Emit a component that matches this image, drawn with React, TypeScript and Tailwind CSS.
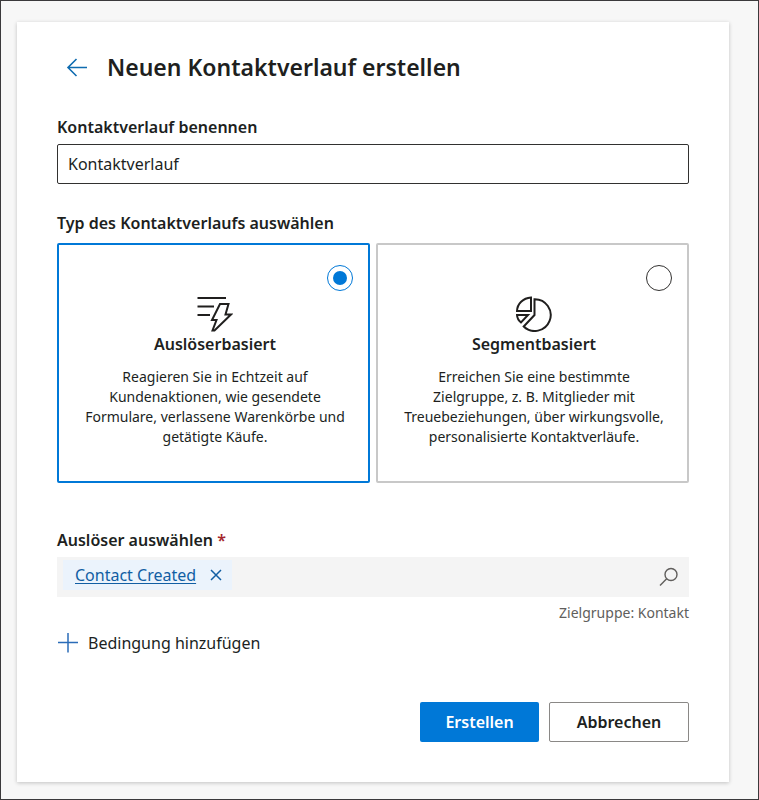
import { useState } from "react";
import type { ReactNode } from "react";

function TriggerIcon() {
  return (
    <svg width="36" height="36" viewBox="0 0 36 36" fill="none" stroke="#201f1e" strokeWidth="2" aria-hidden="true">
      <path d="M0.500 2H29M0.500 10.500H17M0.500 19H13" />
      <path d="M23 8H31.500L28.500 18.500H34L17.500 34.500H15.500L19.500 24H15Z" />
    </svg>
  );
}

function SegmentIcon() {
  return (
    <svg width="36" height="36" viewBox="0 0 36 36" fill="none" stroke="#201f1e" strokeWidth="2" aria-hidden="true">
      <path d="M18.500 3.200A15.900 15.900 0 1 1 7.700 30.500L18.500 19Z" />
      <path d="M15 1.500V15H1C1.300 8 7 2 15 1.500Z" />
      <path d="M1 19H12L5 26.500C2.500 24.500 1.200 22 1 19Z" />
    </svg>
  );
}

type OptionProps = {
  value: string;
  title: string;
  text: string;
  icon: ReactNode;
  checked: boolean;
  onSelect: (value: string) => void;
};

function TypeOption({ value, title, text, icon, checked, onSelect }: OptionProps) {
  return (
    <label
      className={`flex min-h-60 flex-1 flex-col items-center rounded-xs border-2 pt-5 pr-[15px] pl-[18px] text-center ${
        checked ? "border-[#0078d7]" : "border-[#c8c8c8]"
      }`}
    >
      <input
        type="radio"
        name="journey-type"
        value={value}
        checked={checked}
        onChange={() => onSelect(value)}
        className="grid size-[26px] appearance-none place-content-center self-end rounded-full border border-[#323130] before:size-3.5 before:rounded-full checked:border-[#0078d7] checked:before:bg-[#0078d7]"
      />
      <span className="mt-[5px]">{icon}</span>
      <span className="text-base leading-6 font-semibold">{title}</span>
      <span className="mt-[11px] px-1 text-sm leading-5">{text}</span>
    </label>
  );
}

export default function App() {
  const [name, setName] = useState("Kontaktverlauf");
  const [type, setType] = useState("trigger");

  return (
    <div className="min-h-screen border border-[#3b3a3c] bg-[#f7f7f7] pt-[21px] pr-[29px] pb-4 pl-4 font-['Noto_Sans','Segoe_UI',sans-serif] text-[#201f1e]">
      <main className="bg-white px-10 pt-[25px] pb-10 shadow-[0_1px_4px_rgba(0,0,0,0.22)]">
        <header className="flex h-10 items-center gap-5 pl-2">
          <button type="button" aria-label="Zurück" className="text-[#0f6cb0]">
            <svg width="22" height="20" viewBox="0 0 22 20" fill="none" stroke="currentColor" strokeWidth="1.600" aria-hidden="true">
              <path d="M22 10.500H3M11.500 2L3 10.500L11.500 19" />
            </svg>
          </button>
          <h1 className="text-[23px] font-semibold">Neuen Kontaktverlauf erstellen</h1>
        </header>

        <form onSubmit={(e) => e.preventDefault()}>
          <label htmlFor="journey-name" className="mt-7 block text-base leading-6 font-semibold">
            Kontaktverlauf benennen
          </label>
          <input
            id="journey-name"
            type="text"
            value={name}
            onChange={(e) => setName(e.target.value)}
            className="mt-[5px] h-10 w-full rounded-xs border border-[#323130] px-2.5 text-base"
          />

          <fieldset className="mt-[27px]">
            <legend className="text-base leading-6 font-semibold">Typ des Kontaktverlaufs auswählen</legend>
            <div className="mt-2 flex gap-1.5">
              <TypeOption
                value="trigger"
                title="Auslöserbasiert"
                text="Reagieren Sie in Echtzeit auf Kundenaktionen, wie gesendete Formulare, verlassene Warenkörbe und getätigte Käufe."
                icon={<TriggerIcon />}
                checked={type === "trigger"}
                onSelect={setType}
              />
              <TypeOption
                value="segment"
                title="Segmentbasiert"
                text="Erreichen Sie eine bestimmte Zielgruppe, z. B. Mitglieder mit Treuebeziehungen, über wirkungsvolle, personalisierte Kontaktverläufe."
                icon={<SegmentIcon />}
                checked={type === "segment"}
                onSelect={setType}
              />
            </div>
          </fieldset>

          <label htmlFor="trigger-search" className="mt-[45px] block text-base leading-6 font-semibold">
            Auslöser auswählen <span className="text-[#a4262c]">*</span>
          </label>
          <div className="mt-[5px] flex h-10 items-center bg-[#f4f4f4] pr-2.5 pl-1.5">
            <span className="mt-[3px] flex h-[30px] items-center gap-3.5 self-start bg-[#ebf3fc] pr-2.5 pl-3 text-[#115ea3]">
              <a href="#contact-created" className="text-base underline underline-offset-2">
                Contact Created
              </a>
              <button type="button" aria-label="Contact Created entfernen">
                <svg width="12" height="12" viewBox="0 0 12 12" fill="none" stroke="currentColor" strokeWidth="1.500" aria-hidden="true">
                  <path d="M1 1L11 11M11 1L1 11" />
                </svg>
              </button>
            </span>
            <input id="trigger-search" type="text" className="h-full min-w-0 flex-1 bg-transparent px-2 text-base outline-none" />
            <button type="button" aria-label="Suchen" className="text-[#605e5c]">
              <svg width="20" height="20" viewBox="0 0 20 20" fill="none" stroke="currentColor" strokeWidth="1.400" aria-hidden="true">
                <circle cx="12" cy="7.500" r="6" />
                <path d="M7.700 11.700L1 18.500" />
              </svg>
            </button>
          </div>
          <p className="mt-1.5 text-right text-sm leading-5 text-[#605e5c]">Zielgruppe: Kontakt</p>

          <button type="button" className="mt-2 flex items-center gap-2.5 text-base leading-6">
            <svg width="21" height="20" viewBox="0 0 21 20" fill="none" stroke="#2b6cb8" strokeWidth="1.500" aria-hidden="true">
              <path d="M1 9.500H21M11 0V19.500" />
            </svg>
            Bedingung hinzufügen
          </button>

          <div className="mt-[47px] flex justify-end gap-2.5 text-base font-semibold">
            <button type="submit" className="h-10 w-[119px] rounded-xs bg-[#0078d7] text-white">
              Erstellen
            </button>
            <button type="button" className="h-10 w-[140px] rounded-xs border border-[#8a8886]">
              Abbrechen
            </button>
          </div>
        </form>
      </main>
    </div>
  );
}
